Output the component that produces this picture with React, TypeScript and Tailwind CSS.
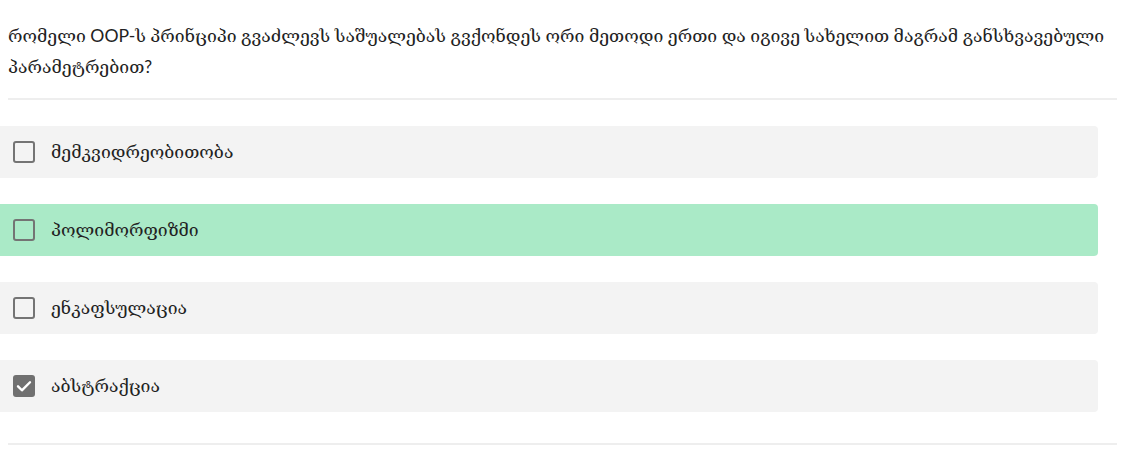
import React from "react";

const options = [
  { label: "მემკვიდრეობითობა", checked: false, correct: false },
  { label: "პოლიმორფიზმი", checked: false, correct: true },
  { label: "ენკაფსულაცია", checked: false, correct: false },
  { label: "აბსტრაქცია", checked: true, correct: false },
];

function Box({ checked }: { checked: boolean }) {
  if (checked) {
    return (
      <span className="flex h-[22px] w-[22px] shrink-0 items-center justify-center rounded-[3px] bg-[#707070]">
        <svg width="18" height="18" viewBox="0 0 24 24" fill="none">
          <path d="M4 12.5l5.2 5.2L20 7" stroke="white" strokeWidth="3.2" strokeLinecap="round" strokeLinejoin="round" />
        </svg>
      </span>
    );
  }
  return <span className="block h-[22px] w-[22px] shrink-0 rounded-[3px] border-[2.5px] border-[#747474]" />;
}

export default function App() {
  return (
    <div className="w-[1132px] bg-white pt-[20px] text-[#222] [font-family:Lato,'DejaVu_Serif',sans-serif]">
      <div className="px-2">
        <p className="pr-[6px] text-[17.6px] leading-[31px]">
          რომელი OOP-ს პრინციპი გვაძლევს საშუალებას გვქონდეს ორი მეთოდი ერთი და იგივე სახელით მაგრამ განსხვავებული პარამეტრებით?
        </p>
        <div className="mt-[16px] h-[2px] w-[1109px] bg-[#eeeeee]" />
      </div>
      <div className="mt-[26px] flex w-[1098px] flex-col gap-[26px]">
        {options.map((o) => (
          <div
            key={o.label}
            className={`flex h-[52px] items-center gap-[16px] rounded-r-[4px] pl-[13px] ${o.correct ? "bg-[#aaeac7]" : "bg-[#f3f3f3]"}`}
          >
            <Box checked={o.checked} />
            <span className="text-[17.6px]">{o.label}</span>
          </div>
        ))}
      </div>
      <div className="mx-2 mt-[31px] h-[2px] w-[1109px] bg-[#eeeeee]" />
    </div>
  );
}
